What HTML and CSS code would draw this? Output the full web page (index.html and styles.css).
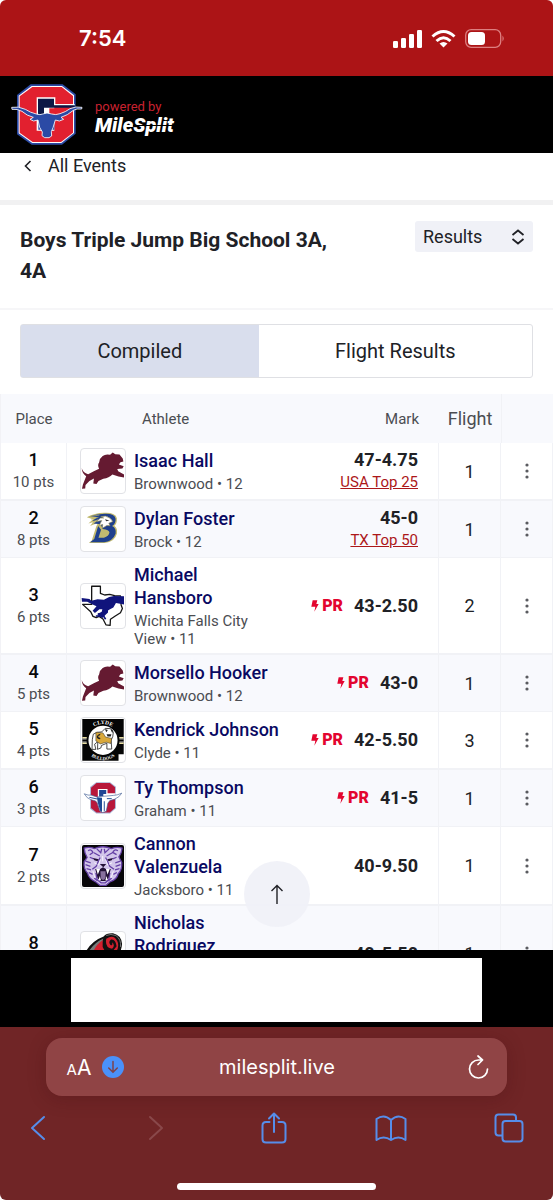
FILE: index.html
```html
<!DOCTYPE html>
<html lang="en">
<head>
<meta charset="utf-8">
<meta name="viewport" content="width=device-width, initial-scale=1">
<title>Boys Triple Jump Big School 3A, 4A</title>
<link rel="stylesheet" href="styles.css">
</head>
<body>
<svg class="defs" aria-hidden="true">
  <symbol id="dots" viewBox="0 0 8 18"><circle cx="4" cy="3" r="1.6"/><circle cx="4" cy="9" r="1.6"/><circle cx="4" cy="15" r="1.6"/></symbol>
  <symbol id="bolt" viewBox="0 0 24 36"><path d="M5 1H19L16 12H23L10 35L13 20H1Z"/></symbol>
  <symbol id="lion" viewBox="240 148 136 136">
    <path fill="#651a31" d="M242 207Q246 222 262 226Q280 216 296 209Q290 198 296 190Q298 176 307 170Q316 162 330 166L338 159L346 164L359 165L369 177L371 187L362 189L357 196L372 201L368 208L352 210L355 217L373 227V236L356 233L337 227Q327 238 309 240L294 247L288 256L278 255L280 239L266 247L254 259L253 270L243 271L246 258L256 232Q244 226 242 207Z"/>
  </symbol>
  <symbol id="longhorn" viewBox="35 253 216 183">
    <path fill="#2b4aa5" d="M94 254H190L229 284V402L188 435H97L53 404V286Z"/>
    <path fill="#fff" d="M97 259H188L224 287V400L186 430H99L58 401V288Z"/>
    <path fill="#e2202f" d="M99 262H187L221 289V399L185 427H100L61 399V290Z"/>
    <path fill="#fff" d="M112 293H168V313H226V318H165V326H150V345H165V393H112Z"/>
    <path fill="#0d1745" d="M116 297H164V317H226V324H134V345H116Z"/>
    <path fill="#2b4aa5" d="M117 345H165V390H117Z"/>
    <path fill="#2b4aa5" stroke="#fff" stroke-width="2.500" stroke-linejoin="round" d="M37 323Q57 319 78 329Q93 339 111 343Q123 347 130 343L143 340L157 343Q169 347 182 342Q199 337 212 327Q230 319 248 323L247 328Q232 326 222 332Q205 347 185 353L193 359L180 364L168 361L161 384L156 396L157 409L149 414H136L128 408L129 397L121 383L116 361L103 364L92 359L102 353Q82 348 68 335Q54 327 38 329Z"/>
  </symbol>
</svg>

<div class="phone">
  <div class="status">
    <time class="clock">7:54</time>
    <div class="signals">
      <svg width="29" height="19" viewBox="0 0 29 19" fill="#fff"><rect x="0" y="12" width="5" height="7" rx="1.300"/><rect x="8" y="9" width="5" height="10" rx="1.300"/><rect x="16" y="5" width="5" height="14" rx="1.300"/><rect x="24" y="1" width="5" height="18" rx="1.300"/></svg>
      <svg width="25" height="19" viewBox="0 0 25 19" fill="none" stroke="#fff" stroke-width="3"><path d="M1.500 7.500Q12.500-2.500 23.500 7.500"/><path d="M5.500 12Q12.500 5.500 19.500 12"/><path fill="#fff" stroke="none" d="M8.500 14.500Q12.500 11.500 16.500 14.500L12.500 18.500Z"/></svg>
      <svg width="40" height="19" viewBox="0 0 40 19"><rect x=".7" y=".7" width="35" height="17.600" rx="5.500" fill="none" stroke="#dd7f80" stroke-width="1.300"/><rect x="3" y="3" width="17" height="13" rx="3.500" fill="#fff"/><path fill="#dd7f80" d="M37.500 6.500Q40 9.500 37.500 12.500Z"/></svg>
    </div>
  </div>

  <header class="brand">
    <svg class="brand-logo" role="img" aria-label="Graham"><use href="#longhorn"/></svg>
    <div class="powered">
      <span class="powered-by">powered by</span>
      <span class="wordmark">Mile<span class="cut">Split</span></span>
    </div>
  </header>

  <main class="content">
    <div class="scroll">
      <nav class="back"><a class="back-link" href="#events"><svg width="8" height="12" viewBox="0 0 8 12" fill="none" stroke="#202126" stroke-width="1.600"><path d="M6.500 1L1.500 6L6.500 11"/></svg>All Events</a></nav>
      <section class="event">
        <h1 class="title">Boys Triple Jump Big School 3A, 4A</h1>
        <div class="picker">
          <select class="select" aria-label="View"><option>Results</option></select>
          <svg class="picker-icon" width="14" height="16" viewBox="0 0 14 16" fill="none" stroke="#202126" stroke-width="1.800"><path d="M1.500 6L7 1.500L12.500 6M1.500 10L7 14.500L12.500 10"/></svg>
        </div>
      </section>
      <div class="tabs">
        <button class="tab tab-on" type="button">Compiled</button>
        <button class="tab" type="button">Flight Results</button>
      </div>

      <table class="results">
        <colgroup><col class="c-place"><col class="c-athlete"><col class="c-mark"><col class="c-flight"><col class="c-menu"></colgroup>
        <thead><tr><th>Place</th><th class="h-athlete">Athlete</th><th class="h-mark">Mark</th><th class="h-flight">Flight</th><th class="h-menu" aria-label="Actions"></th></tr></thead>
        <tbody>
          <tr>
            <td class="place"><b>1</b><span>10 pts</span></td>
            <td><div class="athlete"><span class="crest"><svg><use href="#lion"/></svg></span><div class="who"><a href="#a1">Isaac Hall</a><span>Brownwood • 12</span></div></div></td>
            <td class="mark"><b>47-4.75</b><a class="rank" href="#usa">USA Top 25</a></td>
            <td class="flight">1</td><td class="menu"><button type="button" aria-label="More"><svg><use href="#dots"/></svg></button></td>
          </tr>
          <tr>
            <td class="place"><b>2</b><span>8 pts</span></td>
            <td><div class="athlete"><span class="crest"><svg viewBox="240 320 136 136"><path fill="#c3bb70" d="M258 352Q286 336 318 338Q347 338 351 355Q352 371 343 378Q354 386 351 403Q344 429 314 431H264L273 424L287 380L293 369L268 379L278 366L263 371L277 358Z"/><path fill="#1f408d" d="M265 349Q294 340 318 341Q344 341 347 356Q348 370 336 379Q350 386 347 403Q338 427 311 429H268L281 419L293 379L302 390L294 415H311Q326 411 328 399Q327 390 307 388L301 373L279 371L294 361L275 363L291 351Z"/><path fill="#fff" stroke="#898653" stroke-width="2" d="M300 354L288 365L304 362L296 377L307 374L306 386L320 377L330 378L326 370L338 365Q332 352 315 348L301 350L310 354Z"/><path stroke="#c3bb70" stroke-width="2" d="M264 350L297 345M271 358L294 352M275 367L293 359"/><path fill="#333" d="M314 358L328 362L318 364Z"/></svg></span><div class="who"><a href="#a2">Dylan Foster</a><span>Brock • 12</span></div></div></td>
            <td class="mark"><b>45-0</b><a class="rank" href="#tx">TX Top 50</a></td>
            <td class="flight">1</td><td class="menu"><button type="button" aria-label="More"><svg><use href="#dots"/></svg></button></td>
          </tr>
          <tr>
            <td class="place"><b>3</b><span>6 pts</span></td>
            <td><div class="athlete"><span class="crest"><svg viewBox="240 40 136 136"><path fill="#fff" stroke="#151515" stroke-width="4" stroke-linejoin="round" d="M273 47H300V69L313 74L329 72L344 76L362 77L364 105L368 116L362 129L346 139L331 149L330 168L317 166L308 148L296 140L287 144L277 140L270 126L245 103H273Z"/><path fill="#10147c" d="M242 83L266 86L272 92L291 87L311 89L327 80L342 77L373 78V103L361 101L348 99L340 113L324 121L323 128L306 145L290 136L304 126L306 118L297 118L283 130L276 123L288 109L276 103L259 95H243Z"/><path fill="none" stroke="#10147c" stroke-width="5" d="M292 133L322 127M286 139L310 139L316 149"/></svg></span><div class="who"><a href="#a3">Michael Hansboro</a><span>Wichita Falls City View • 11</span></div></div></td>
            <td class="mark"><span class="pr"><svg><use href="#bolt"/></svg>PR</span><b>43-2.50</b></td>
            <td class="flight">2</td><td class="menu"><button type="button" aria-label="More"><svg><use href="#dots"/></svg></button></td>
          </tr>
          <tr>
            <td class="place"><b>4</b><span>5 pts</span></td>
            <td><div class="athlete"><span class="crest"><svg><use href="#lion"/></svg></span><div class="who"><a href="#a4">Morsello Hooker</a><span>Brownwood • 12</span></div></div></td>
            <td class="mark"><span class="pr"><svg><use href="#bolt"/></svg>PR</span><b>43-0</b></td>
            <td class="flight">1</td><td class="menu"><button type="button" aria-label="More"><svg><use href="#dots"/></svg></button></td>
          </tr>
          <tr>
            <td class="place"><b>5</b><span>4 pts</span></td>
            <td><div class="athlete"><span class="crest"><svg viewBox="240 443 136 136">
              <path fill="#050505" d="M244 446H372V555H356V575H244Z"/><path stroke="#e9dfa3" stroke-width="4" d="M244 504H372M244 521H372"/><path stroke="#fff" stroke-width="2" d="M244 508H372M244 517H372"/>
              <path id="arc-top" fill="none" d="M262 492A50 50 0 0 1 354 492"/><path id="arc-low" fill="none" d="M256 543A60 60 0 0 0 360 543"/>
              <circle cx="308" cy="512" r="48" fill="#fff" stroke="#050505" stroke-width="6"/>
              <path fill="#fff" stroke="#222" stroke-width="2.500" d="M278 493Q289 485 304 486L315 475L332 476L340 487L338 501L333 511L335 539H320V521L303 528L302 535L291 540L292 516L282 524L286 540H274L275 510Z"/><path fill="#d9a83b" stroke="#222" stroke-width="1.500" d="M286 487L308 489L316 502L335 506L332 522L318 518L300 523L286 514Z"/><path fill="#222" d="M314 477L323 480L318 487ZM331 478L339 482L337 490ZM319 493H334L332 500H322ZM295 493L300 492L299 496Q293 496 293 502L300 505L299 509Q287 508 289 499Z"/>
              <text class="crest-text crest-top"><textPath href="#arc-top" startOffset="50%">CLYDE</textPath></text><text class="crest-text"><textPath href="#arc-low" startOffset="50%">BULLDOGS</textPath></text>
            </svg></span><div class="who"><a href="#a5">Kendrick Johnson</a><span>Clyde • 11</span></div></div></td>
            <td class="mark"><span class="pr"><svg><use href="#bolt"/></svg>PR</span><b>42-5.50</b></td>
            <td class="flight">3</td><td class="menu"><button type="button" aria-label="More"><svg><use href="#dots"/></svg></button></td>
          </tr>
          <tr>
            <td class="place"><b>6</b><span>3 pts</span></td>
            <td><div class="athlete"><span class="crest"><svg viewBox="240 46 136 136"><path fill="#a8b2d4" d="M287 65H330L348 79V146L330 162H287L268 147V80Z"/><path fill="#b8173a" d="M288 68H329L345 81V145L329 159H288L271 145V82Z"/><path fill="#fff" d="M292 86H322V99H347V108H320V138H292Z"/><path fill="#1f4594" d="M296 89H318V102H309V109H296Z"/><path fill="#fff" stroke="#405d94" stroke-width="2" d="M250 101Q263 107 271 105L289 111L302 109L320 108L340 106Q351 106 366 99L357 110Q344 120 329 122L323 130L318 155L307 159L298 154L291 130L285 123L270 119Q259 116 250 101Z"/><path fill="#1e4b96" d="M289 112L305 113V157L299 153L292 129Z"/><path stroke="#1e4b96" stroke-width="3" d="M312 124V154M320 116L335 116M266 112L290 117"/></svg></span><div class="who"><a href="#a6">Ty Thompson</a><span>Graham • 11</span></div></div></td>
            <td class="mark"><span class="pr"><svg><use href="#bolt"/></svg>PR</span><b>41-5</b></td>
            <td class="flight">1</td><td class="menu"><button type="button" aria-label="More"><svg><use href="#dots"/></svg></button></td>
          </tr>
          <tr>
            <td class="place"><b>7</b><span>2 pts</span></td>
            <td><div class="athlete"><span class="crest"><svg viewBox="240 249 136 136"><rect x="243" y="252" width="130" height="130" rx="6" fill="#070609"/><path fill="#d3c6ea" stroke="#6540a5" stroke-width="4" d="M250 262Q264 256 282 263Q307 252 334 263Q352 256 367 262Q365 279 357 289L366 306Q367 330 355 341Q351 359 331 365L317 377H299L284 365Q265 357 260 339Q247 325 250 304L259 290Q251 279 250 262Z"/><g fill="none" stroke="#6540a5" stroke-width="4"><path d="M262 270Q272 263 277 275L267 282M354 270Q343 263 338 275L350 282M289 264L301 276L304 264M327 264L314 276L312 264M280 276L298 286M337 276L319 286M254 302L270 307M254 313L269 318M257 325L271 329M362 302L346 307M362 313L347 318M359 325L345 329M267 290L279 295M350 290L338 295M264 337L276 343M351 337L340 343M281 354L291 363M335 354L324 363"/><path d="M299 291L287 318L275 327M316 291L329 318L342 327M286 338L290 359L302 369H315L326 359L329 338"/></g><path fill="none" stroke="#fff" stroke-width="2.500" d="M281 307L291 312M336 307L326 312M307 286V303M277 333L283 354M340 333L333 354M300 297L294 315M316 297L323 315"/><path fill="#221135" d="M277 292L295 296L291 302L281 299ZM339 292L321 296L325 302L335 299ZM298 311H318L309 321ZM284 326L299 326L308 321L317 326L332 326L325 353L317 363H299L291 353Z"/><path fill="#fff" d="M287 326L299 326L292 343ZM317 326L329 326L322 343ZM294 361L298 348L302 362ZM315 362L319 348L322 360Z"/><path fill="#87709d" d="M300 333H316V354Q308 366 301 354Z"/></svg></span><div class="who"><a href="#a7">Cannon Valenzuela</a><span>Jacksboro • 11</span></div></div></td>
            <td class="mark"><b>40-9.50</b></td>
            <td class="flight">1</td><td class="menu"><button type="button" aria-label="More"><svg><use href="#dots"/></svg></button></td>
          </tr>
          <tr>
            <td class="place"><b>8</b><span>&nbsp;</span></td>
            <td><div class="athlete"><span class="crest"><svg viewBox="240 511 136 136"><path fill="#111" d="M253 575Q272 539 310 525Q318 514 339 515Q365 521 367 548Q365 572 350 590L326 620H276Z"/><path fill="#777b79" d="M261 575Q280 544 309 531L300 557L311 580Z"/><path fill="#d3202e" d="M277 574Q285 552 307 536L307 557L319 580Z"/><path fill="none" stroke="#a8aaa9" stroke-width="2" d="M318 522Q332 515 348 522Q365 534 362 557"/><path fill="#d3202e" d="M318 532Q341 517 352 539Q362 560 339 585H327L350 555Q347 532 333 534Q323 541 331 551Q339 555 336 543Q347 552 336 563Q313 559 318 532Z"/></svg></span><div class="who"><a href="#a8">Nicholas Rodriguez</a><span class="two-lines"></span></div></div></td>
            <td class="mark"><b>40-5.50</b></td>
            <td class="flight">1</td><td class="menu"><button type="button" aria-label="More"><svg><use href="#dots"/></svg></button></td>
          </tr>
        </tbody>
      </table>
    </div>
    <button class="to-top" type="button" aria-label="Back to top"><svg width="14" height="20" viewBox="0 0 14 20" fill="none" stroke="#202126" stroke-width="1.400"><path d="M7 20V1.500M1.500 7L7 1.500L12.500 7"/></svg></button>
  </main>

  <aside class="ad" aria-label="Advertisement"><div class="ad-box"></div></aside>

  <footer class="browser">
    <div class="address">
      <button class="text-size" type="button" aria-label="Text size"><span class="small-a">A</span>A</button>
      <button class="download" type="button" aria-label="Downloads"><svg width="22" height="22" viewBox="0 0 22 22"><circle cx="11" cy="11" r="11" fill="#4a91fa"/><path fill="none" stroke="#7c434e" stroke-width="1.500" stroke-linecap="round" d="M11 5.500V16M6.700 12L11 16.200L15.300 12"/></svg></button>
      <span class="url">milesplit.live</span>
      <button class="reload" type="button" aria-label="Reload"><svg width="21" height="24" viewBox="0 0 21 24" fill="none" stroke="#fff" stroke-width="1.700" stroke-linecap="round" stroke-linejoin="round"><path d="M19.500 14A9 9 0 1 1 10.500 5H14M10 1L14.500 5L10 9.500"/></svg></button>
    </div>
    <nav class="tools" aria-label="Browser">
      <button type="button" aria-label="Back"><svg width="16" height="26" viewBox="0 0 16 26"><path d="M14 2L2 13L14 24"/></svg></button>
      <button class="off" type="button" aria-label="Forward"><svg width="16" height="26" viewBox="0 0 16 26"><path d="M2 2L14 13L2 24"/></svg></button>
      <button type="button" aria-label="Share"><svg width="26" height="32" viewBox="0 0 26 32"><path d="M8.500 10H5Q1.500 10 1.500 13.500V27Q1.500 30.500 5 30.500H21Q24.500 30.500 24.500 27V13.500Q24.500 10 21 10H17.500M13 20V1.500M8 6.500L13 1.500L18 6.500"/></svg></button>
      <button type="button" aria-label="Bookmarks"><svg width="32" height="27" viewBox="0 0 32 27"><path d="M16 5Q9-1.500 1.500 4V25Q8.500 20 16 25Q23.500 20 30.500 25V4Q23-1.500 16 5V25"/></svg></button>
      <button type="button" aria-label="Tabs"><svg width="30" height="30" viewBox="0 0 30 30"><path d="M8 22.500H4.500Q1.500 22.500 1.500 19.500V4.500Q1.500 1.500 4.500 1.500H19Q22 1.500 22 4.500V8"/><rect x="8.500" y="8" width="20" height="20.500" rx="3"/></svg></button>
    </nav>
    <div class="home-bar"></div>
  </footer>
</div>
</body>
</html>
```
FILE: styles.css
```css
* { box-sizing: border-box; }
body { margin: 0; background: #fff; color: #202126; font-family: Roboto, sans-serif; }
button { border: 0; padding: 0; background: none; color: inherit; font: inherit; }
a { color: inherit; text-decoration: none; }
svg { display: block; flex: none; }
.defs { position: absolute; width: 0; height: 0; }

.phone { display: flex; flex-direction: column; height: 100vh; overflow: hidden; border-radius: 6px; }

.status { flex: none; display: flex; align-items: center; justify-content: space-between; height: 76px; padding: 0 48px 0 79px; background: #ac1416; color: #fff; }
.clock { font: 600 22px/28px Inter, sans-serif; }
.signals { display: flex; align-items: center; gap: 9px; }

.brand { flex: none; display: flex; align-items: center; gap: 12px; height: 77px; padding: 0 11px; background: #000; }
.brand-logo { width: 72px; height: 61px; }
.powered { display: flex; flex-direction: column; padding-top: 4px; }
.powered-by { color: #c92230; font-size: 13px; line-height: 16px; }
.wordmark { color: #fff; font-size: 20px; font-weight: 900; font-style: italic; line-height: 20px; }
.cut { position: relative; }
.cut::after { content: ""; position: absolute; left: 0; right: 0; top: 50%; height: 1px; background: #000; }

.content { position: relative; flex: 1 1 0; min-height: 0; background: #fff; }
.scroll { height: 100%; overflow: hidden; }
.back { padding: 0 24px 21px; border-bottom: 5px solid #f1f1f2; }
.back-link { display: flex; align-items: center; gap: 16px; font-size: 18px; line-height: 26px; }
.event { display: flex; justify-content: space-between; align-items: flex-start; gap: 64px; padding: 16px 20px 21px; border-bottom: 2px solid #f6f6f8; }
.title { margin: 0; padding-top: 4px; font-size: 21px; font-weight: 700; line-height: 31px; }
.picker { position: relative; flex: none; }
.select { display: block; width: 118px; height: 31px; padding: 0 8px; border: 0; border-radius: 3px; background: #f0f1f7; color: #202126; font: 18px/31px Roboto, sans-serif; appearance: none; }
.picker-icon { position: absolute; right: 8px; top: 8px; pointer-events: none; }
.tabs { display: flex; margin: 14px 20px 16px; border: 1px solid #dfe0e4; border-radius: 3px; }
.tab { flex: 1 1 auto; height: 52px; font-size: 20px; }
.tab-on { background: #d9deed; }

.results { width: 100%; table-layout: fixed; border-collapse: separate; border-spacing: 0; border-left: 1px solid #f2f2f6; }
.c-place { width: 66px; }
.c-athlete { width: 213px; }
.c-flight { width: 62px; }
.c-menu { width: 52px; }
th { height: 49px; padding: 0; background: #f8f9fd; color: #4b4d52; font-size: 15px; font-weight: 400; }
th.h-athlete { padding-left: 75px; text-align: left; }
th.h-mark { padding-right: 20px; text-align: right; }
th.h-flight { font-size: 18px; }
th.h-menu { border-left: 1px solid #f1f2f6; }
td { padding: 5px 0; border-bottom: 1px solid #f1f2f6; vertical-align: middle; }
tr:nth-child(odd) td { border-bottom-width: 2px; }
tr:nth-child(even) td { background: #f8f9fd; }
tr .place, tr .flight, tr .menu { border-right: 1px solid #f1f2f6; text-align: center; }
tr .mark { border-right: 1px solid #f1f2f6; }
.place b, .place span { display: block; line-height: 22px; }
.place b { color: #08080b; font-size: 18px; font-weight: 500; }
.place span { color: #4b4d52; font-size: 15px; }
.athlete { display: flex; align-items: center; gap: 8px; padding-left: 13px; }
.crest { flex: none; width: 46px; height: 46px; border: 1px solid #e1e2e6; border-radius: 4px; background: #fff; overflow: hidden; }
.crest svg { width: 44px; height: 44px; }
.crest-text { fill: #fff; font: 700 14px "Liberation Serif", serif; text-anchor: middle; }
.crest-top { font-size: 17px; }
.who { display: flex; flex-direction: column; gap: 3px; min-width: 0; }
.who a { color: #090962; font-size: 18px; font-weight: 500; line-height: 23px; }
.who span { color: #4b4d52; font-size: 15px; line-height: 18px; }
.who .two-lines { min-height: 36px; }
.mark { padding-right: 20px; text-align: right; font-size: 18px; line-height: 22px; white-space: nowrap; }
.rank { display: block; color: #ac1719; font-size: 15px; text-decoration: underline; }
.pr { display: inline-flex; align-items: center; gap: 3px; margin-right: 11px; color: #e3052f; font-size: 16px; font-weight: 900; }
.pr svg { width: 8px; height: 12px; fill: #e3052f; }
.flight { font-size: 18px; }
.menu button { display: block; margin: 0 auto; }
.menu svg { width: 8px; height: 18px; fill: #5a5b60; }
.to-top { position: absolute; left: 50%; bottom: 23px; display: grid; place-items: center; width: 66px; height: 66px; margin-left: -33px; border-radius: 50%; background: rgba(240, 241, 247, .92); }

.ad { flex: none; padding: 8px 71px 5px; background: #000; }
.ad-box { height: 64px; background: #fff; }

.browser { flex: none; padding: 11px 0 10px; background: #702526; color: #fff; font-family: Inter, sans-serif; }
.address { display: grid; grid-template-columns: 26px 22px 1fr 21px; align-items: center; column-gap: 10px; height: 58px; margin: 0 46px; padding: 0 18px 0 20px; border-radius: 16px; background: #904445; box-shadow: 0 3px 18px rgba(60, 10, 15, .25); }
.text-size { font-size: 21px; white-space: nowrap; }
.small-a { font-size: 15px; }
.url { padding-right: 38px; text-align: center; font-size: 20px; }
.tools { display: flex; align-items: center; justify-content: space-between; height: 64px; padding: 0 22px 0 16px; }
.tools button { display: grid; place-items: center; width: 44px; height: 44px; }
.tools svg { fill: none; stroke: #568de9; stroke-width: 2; stroke-linecap: round; stroke-linejoin: round; }
.tools .off svg { stroke: #89484a; }
.home-bar { width: 36%; height: 7px; margin: 23px auto 0; border-radius: 4px; background: #fff; }
```
